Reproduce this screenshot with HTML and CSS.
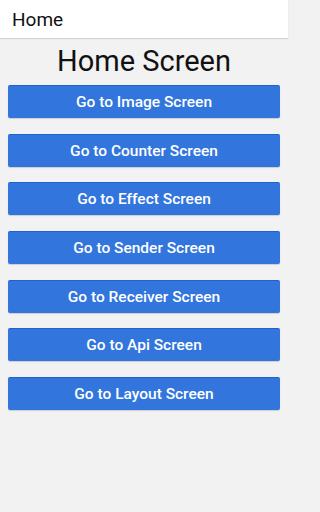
FILE: index.html
```html
<!DOCTYPE html>
<html>
<head>
<meta charset="utf-8">
<link rel="stylesheet" href="styles.css">
</head>
<body>
<div class="screen">
<header class="appbar"><span class="appbar-title">Home</span></header>
<main class="content">
  <h1 class="heading">Home Screen</h1>
  <div class="buttons">
    <button class="btn">Go to Image Screen</button>
    <button class="btn">Go to Counter Screen</button>
    <button class="btn">Go to Effect Screen</button>
    <button class="btn">Go to Sender Screen</button>
    <button class="btn">Go to Receiver Screen</button>
    <button class="btn">Go to Api Screen</button>
    <button class="btn">Go to Layout Screen</button>
  </div>
</main>
</div>
</body>
</html>
```
FILE: styles.css
```css
html, body {
  margin: 0;
  padding: 0;
  height: 100%;
}
body {
  background: #f2f2f2;
  font-family: Roboto, "Noto Sans", sans-serif;
}
.screen {
  width: 288px;
  min-height: 512px;
  background: #f2f2f2;
}
.appbar {
  height: 38px;
  background: #ffffff;
  display: flex;
  align-items: center;
  padding: 0 12px;
  box-shadow: 0 1px 1px rgba(0,0,0,0.12);
  position: relative;
}
.appbar-title {
  font-size: 19px;
  color: #111;
}
.content {
  padding: 0 8px;
}
.heading {
  margin: 0;
  padding-top: 3px;
  height: 44px;
  font-weight: 400;
  font-size: 29px;
  line-height: 40px;
  text-align: center;
  color: #111;
}
.buttons {
  display: flex;
  flex-direction: column;
  gap: 15.67px;
}
.btn {
  height: 33px;
  border: 0;
  border-top: 1px solid #1f63cf;
  border-radius: 2px;
  background: #3175dd;
  color: #fff;
  font-family: Roboto, sans-serif;
  font-weight: 500;
  font-size: 15.5px;
  box-shadow: 0 1px 1px rgba(0,0,0,0.15);
  padding: 0;
}
```
